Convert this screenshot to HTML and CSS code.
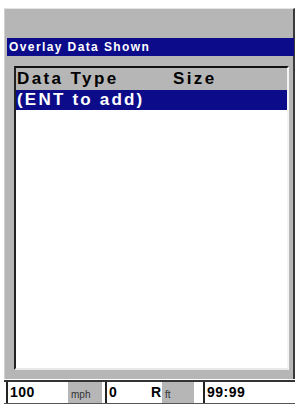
FILE: index.html
```html
<!DOCTYPE html>
<html lang="en">
<head>
    <meta charset="UTF-8">
    <title>Overlay Data Shown</title>
    <link rel="stylesheet" href="styles.css">
</head>
<body>
    <div class="screen">
        <div class="panel">
            <div class="title">Overlay Data Shown</div>
            <div class="list">
                <div class="list-head">
                    <span class="col-type">Data Type</span>
                    <span class="col-size">Size</span>
                </div>
                <div class="row selected">(ENT to add)</div>
            </div>
        </div>
        <div class="status">
            <div class="field speed">
                <span class="value">100</span>
                <span class="unit">mph</span>
            </div>
            <div class="field depth">
                <span class="value">0</span>
                <span class="flag">R</span>
                <span class="unit">ft</span>
            </div>
            <div class="field time">
                <span class="value">99:99</span>
            </div>
        </div>
    </div>
</body>
</html>
```

FILE: styles.css
```css
* {
    margin: 0;
    padding: 0;
    box-sizing: border-box;
}

body {
    width: 299px;
    height: 409px;
    background-color: #fff;
    font-family: "Liberation Sans", Arial, sans-serif;
}

.screen {
    padding: 8px 4px 0 4px;
}

.panel {
    height: 371px;
    background-color: #b6b6b6;
    border-top: 1px solid #e4e4e4;
    border-left: 1px solid #d0d0d0;
    border-right: 2px solid #3a3a3a;
    padding: 29px 0 0 2px;
}

.title {
    height: 18px;
    width: 287px;
    background-color: #0c0c8a;
    color: #fff;
    font-size: 12px;
    font-weight: bold;
    letter-spacing: 1.4px;
    line-height: 18px;
    padding-left: 2px;
}

.list {
    margin: 10px 0 0 7px;
    width: 275px;
    height: 304px;
    background-color: #fff;
    border-top: 2px solid #111;
    border-left: 2px solid #222;
    border-right: 2px solid #f4f4f4;
    border-bottom: 2px solid #e8e8e8;
}

.list-head {
    position: relative;
    height: 22px;
    background-color: #b6b6b6;
    font-size: 17px;
    font-weight: bold;
    letter-spacing: 2.4px;
    line-height: 22px;
    color: #000;
    padding-left: 1px;
}

.col-size {
    position: absolute;
    left: 157px;
}

.row {
    height: 20px;
    font-size: 17px;
    font-weight: bold;
    letter-spacing: 2.2px;
    line-height: 20px;
    padding-left: 1px;
}

.row.selected {
    background-color: #0c0c8a;
    color: #fff;
}

.status {
    display: flex;
    height: 24px;
    margin-top: 1px;
    border-top: 2px solid #333;
    border-bottom: 1px solid #555;
    background-color: #fff;
    width: 291px;
}

.field {
    display: flex;
    align-items: stretch;
    border-left: 2px solid #222;
    font-size: 14px;
    font-weight: bold;
    letter-spacing: 0.5px;
    line-height: 21px;
}

.field .value {
    padding-left: 2px;
}

.speed {
    width: 96px;
    margin-left: 2px;
}

.speed .value {
    width: 60px;
}

.unit {
    background-color: #b6b6b6;
    font-size: 10px;
    font-weight: normal;
    letter-spacing: 0;
    color: #333;
    padding: 2px 0 0 3px;
    width: 34px;
}

.depth {
    width: 92px;
    margin-left: 3px;
}

.depth .value {
    width: 44px;
}

.flag {
    width: 11px;
}

.depth .unit {
    width: 32px;
}

.time {
    flex: 1;
    margin-left: 6px;
}
```
